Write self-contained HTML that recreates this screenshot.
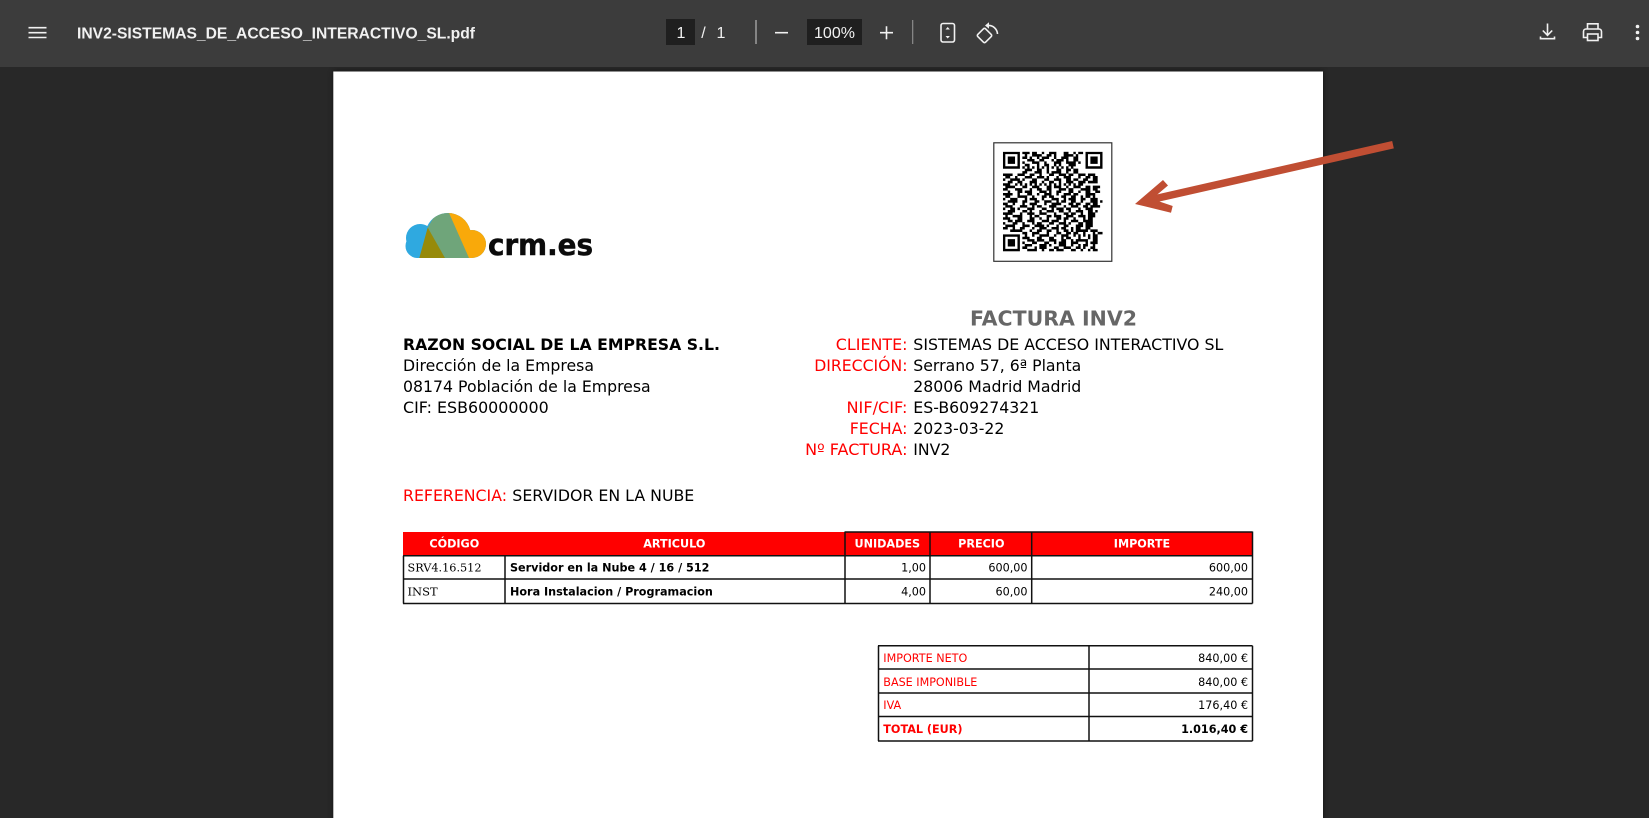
<!DOCTYPE html>
<html lang="es">
<head>
<meta charset="utf-8">
<title>INV2-SISTEMAS_DE_ACCESO_INTERACTIVO_SL.pdf</title>
<style>
html,body{margin:0;padding:0;width:1649px;height:818px;overflow:hidden;background:#282828}
svg{display:block;position:absolute;left:0;top:0}
.d{font-family:"DejaVu Sans","Liberation Sans",sans-serif}
.m{font-size:15.8px;fill:#000}
.e{text-anchor:end}
.c{text-anchor:middle}
.t{font-size:11.2px;fill:#000}
.m.r,.t.r{fill:#f00}
.b{font-weight:700}
.h{font-size:11.2px;font-weight:700;fill:#fff;text-anchor:middle}
.ui{font-family:"Liberation Sans",sans-serif;fill:#f1f1f1;font-size:16px}
</style>
</head>
<body>
<svg width="1649" height="818" viewBox="0 0 1649 818" xmlns="http://www.w3.org/2000/svg">
<defs>
<filter id="s" x="-5%" y="-5%" width="110%" height="110%"><feGaussianBlur stdDeviation="3"/></filter>
<clipPath id="cl">
<circle cx="420" cy="238" r="14"/>
<circle cx="417.500" cy="246" r="12"/>
<circle cx="448" cy="236" r="23"/>
<circle cx="472" cy="244" r="14"/>
<rect x="417" y="236" width="55" height="22"/>
</clipPath>
<clipPath id="qc"><rect x="0" y="0" width="41" height="41"/></clipPath>
</defs>

<rect width="1649" height="818" fill="#282828"/>
<rect x="333.300" y="71.500" width="989.700" height="760" fill="#000" opacity=".55" filter="url(#s)"/>
<rect x="333.300" y="71.500" width="989.700" height="750" fill="#fff"/>

<!-- toolbar -->
<rect width="1649" height="67" fill="#3c3c3c"/>
<path d="M28.500 27.700h18M28.500 32.700h18M28.500 37.500h18" stroke="#f1f1f1" stroke-width="1.600" fill="none"/>
<text class="ui" x="77" y="38.500" font-weight="700" textLength="398" lengthAdjust="spacingAndGlyphs">INV2-SISTEMAS_DE_ACCESO_INTERACTIVO_SL.pdf</text>

<rect x="666" y="19" width="29" height="26" fill="#1f1f1f"/>
<text class="ui c" x="681" y="38">1</text>
<text class="ui c" x="703.500" y="38">/</text>
<text class="ui c" x="721" y="38">1</text>
<rect x="755" y="20" width="2" height="24" fill="#858585"/>
<path d="M775 32.700h13" stroke="#f1f1f1" stroke-width="1.600"/>
<rect x="807" y="19" width="55" height="26" fill="#1f1f1f"/>
<text class="ui c" x="834.500" y="38">100%</text>
<path d="M880 32.700h13M886.500 26.200v13" stroke="#f1f1f1" stroke-width="1.600"/>
<rect x="912" y="20" width="1.300" height="24" fill="#858585"/>
<rect x="941" y="23.500" width="13.500" height="18.500" rx="2" fill="none" stroke="#f1f1f1" stroke-width="1.600"/>
<path d="M945.500 29.500l2.200-2.500 2.200 2.500zM945.500 36l2.200 2.500 2.200-2.500z" fill="#f1f1f1"/>
<g fill="none" stroke="#f1f1f1" stroke-width="1.600">
<rect x="-5.500" y="-5.500" width="11" height="11" rx="1.500" transform="translate(984.500 35.500) rotate(45)"/>
<path d="M988 25.500a9 9 0 0 1 9.500 8.500"/>
</g>
<path d="M989 22.300v6.400l-4-3.200z" fill="#f1f1f1"/>
<g fill="none" stroke="#f1f1f1" stroke-width="1.600">
<path d="M1547.500 23.500v11.500M1542.800 30.500l4.700 4.800 4.700-4.800M1540.500 36.500v2.200h14v-2.200"/>
<path d="M1587.500 29v-5.200h10.500v5.200M1587.500 37.500h-4v-6a2.500 2.500 0 0 1 2.500-2.500h13a2.500 2.500 0 0 1 2.500 2.500v6h-4"/>
<rect x="1587.500" y="34" width="10.500" height="6.500"/>
</g>
<circle cx="1637.500" cy="26.500" r="1.800" fill="#f1f1f1"/>
<circle cx="1637.500" cy="32.500" r="1.800" fill="#f1f1f1"/>
<circle cx="1637.500" cy="38.500" r="1.800" fill="#f1f1f1"/>

<!-- logo -->
<g clip-path="url(#cl)">
<rect x="400" y="205" width="90" height="55" fill="#2fa9e0"/>
<path d="M444 205h46v55h-26z" fill="#f9a90a"/>
<path d="M427.500 228L441 205h4.500l23.500 53h-24z" fill="#6fa57a"/>
<path d="M427.700 227.500L445 258h-25.700z" fill="#978a0a"/>
</g>
<rect x="400" y="258" width="90" height="4" fill="#fff"/>
<text class="d b" x="488" y="255" font-size="29" fill="#0b0b0b" stroke="#0b0b0b" stroke-width=".5" textLength="105" lengthAdjust="spacingAndGlyphs">crm.es</text>

<!-- QR -->
<rect x="993.800" y="142.800" width="118" height="118.500" fill="#fff" stroke="#333" stroke-width="1.200"/>
<g transform="translate(1002.900 151.700) scale(2.430)">
<g clip-path="url(#qc)">
<path fill-rule="evenodd" d="M0 0h7v7h-7zM1 1v5h5v-5zM34 0h7v7h-7zM35 1v5h5v-5zM0 34h7v7h-7zM1 35v5h5v-5z"/>
<path d="M2 2h3v3h-3zM36 2h3v3h-3zM2 36h3v3h-3z"/>
<path fill="none" stroke="#000" stroke-width="1.040" d="
M8 .5h3m1 0h2m2 0h1m2 0h3m3 0h2m2 0h1m1 0h2
M9 1.500h1m2 0h4m2 0h2m1 0h1m3 0h4m1 0h1
M8 2.500h2m1 0h1m2 0h1m1 0h3m2 0h1m2 0h3m2 0h2
M10 3.500h3m2 0h2m3 0h1m1 0h3m1 0h1m2 0h2
M8 4.500h1m3 0h3m2 0h1m3 0h3m2 0h4m1 0h1
M9 5.500h2m3 0h1m2 0h2m2 0h1m1 0h1m3 0h3
M8 6.500h1m1 0h1m1 0h1m1 0h1m1 0h1m1 0h1m1 0h1m1 0h1m1 0h1m1 0h1m1 0h1
M9 7.500h3m2 0h2m2 0h1m3 0h2m2 0h2m1 0h2
M8 8.500h2m3 0h3m2 0h1m1 0h4m2 0h1m2 0h2
M0 9.500h4m2 0h3m2 0h2m2 0h1m3 0h2m2 0h3m1 0h2m2 0h3m1 0h3
M1 10.500h2m2 0h1m3 0h3m2 0h3m1 0h1m3 0h1m2 0h3m3 0h1m2 0h2m1 0h2
M0 11.500h1m2 0h4m1 0h1m3 0h2m3 0h2m2 0h3m2 0h2m1 0h2m2 0h2m2 0h2
M2 12.500h2m2 0h2m3 0h3m2 0h1m2 0h2m2 0h1m2 0h3m2 0h3m1 0h4
M0 13.500h3m2 0h1m1 0h1m1 0h1m1 0h1m1 0h1m1 0h1m1 0h1m1 0h1m1 0h1m1 0h1m1 0h1m1 0h1m1 0h1m1 0h2
M1 14.500h4m3 0h2m2 0h3m3 0h2m1 0h3m2 0h1m2 0h3m2 0h2m1 0h3
M0 15.500h2m3 0h3m3 0h1m2 0h2m2 0h2m3 0h3m1 0h2m3 0h4m1 0h2
M2 16.500h1m3 0h2m1 0h3m3 0h3m1 0h1m2 0h2m3 0h2m2 0h1m2 0h2m2 0h2
M0 17.500h4m2 0h1m3 0h2m2 0h1m2 0h3m2 0h1m2 0h3m1 0h2m3 0h4
M1 18.500h2m3 0h4m2 0h1m3 0h2m1 0h2m3 0h2m2 0h2m2 0h1m1 0h2m1 0h1
M0 19.500h1m2 0h3m3 0h1m1 0h3m2 0h1m3 0h3m2 0h1m1 0h3m2 0h2m2 0h3
M2 20.500h4m2 0h2m3 0h2m2 0h3m2 0h1m1 0h2m2 0h2m2 0h1m3 0h3m1 0h1
M0 21.500h2m2 0h1m3 0h1m2 0h3m3 0h1m2 0h4m3 0h2m1 0h2m2 0h2m1 0h2
M1 22.500h3m3 0h3m2 0h1m1 0h2m3 0h3m3 0h1m2 0h3m2 0h2m1 0h4
M0 23.500h1m2 0h2m1 0h1m3 0h3m3 0h2m2 0h1m1 0h3m1 0h2m3 0h1m2 0h3
M2 24.500h3m3 0h2m1 0h1m3 0h1m2 0h3m2 0h2m2 0h1m2 0h3m2 0h2m1 0h1
M0 25.500h4m3 0h1m2 0h3m2 0h3m3 0h1m3 0h2m1 0h2m2 0h1m2 0h3
M1 26.500h1m2 0h4m3 0h1m1 0h2m3 0h2m1 0h3m2 0h3m2 0h3m1 0h3
M0 27.500h3m3 0h2m3 0h2m2 0h1m2 0h1m3 0h2m1 0h2m2 0h1m3 0h1m1 0h2
M2 28.500h2m1 0h3m2 0h3m3 0h3m1 0h3m2 0h1m2 0h3m2 0h4
M0 29.500h1m3 0h2m2 0h1m3 0h1m1 0h2m3 0h2m2 0h3m1 0h1m3 0h2m1 0h3
M1 30.500h4m3 0h3m2 0h4m1 0h1m3 0h1m2 0h2m3 0h3m1 0h3
M0 31.500h2m2 0h1m2 0h2m3 0h1m2 0h3m2 0h3m1 0h2m2 0h1m1 0h2m2 0h2
M3 32.500h5m3 0h1m2 0h2m2 0h2m2 0h1m2 0h2m1 0h1m1 0h5m1 0h3
M8 33.500h2m2 0h3m3 0h1m3 0h2m2 0h2m1 0h2m2 0h1m3 0h1m1 0h3
M9 34.500h1m2 0h1m2 0h4m2 0h1m2 0h3m2 0h1m1 0h1m1 0h1m1 0h1m1 0h2
M8 35.500h3m3 0h2m3 0h2m3 0h1m1 0h2m3 0h1m3 0h1m1 0h2
M10 36.500h3m1 0h3m2 0h3m2 0h2m2 0h1m1 0h5m2 0h2
M8 37.500h1m3 0h2m3 0h2m2 0h1m1 0h3m2 0h3m3 0h1m1 0h3
M9 38.500h3m3 0h3m1 0h1m3 0h3m2 0h1m2 0h1m1 0h2m2 0h1
M8 39.500h2m3 0h1m1 0h3m3 0h2m2 0h3m2 0h2m1 0h1m2 0h2
M10 40.500h4m2 0h1m2 0h2m1 0h3m3 0h2m2 0h1m2 0h1m1 0h2"/>
</g>
</g>

<!-- heading + address -->
<text class="d b" x="970" y="325.500" font-size="20.800" fill="#666" textLength="167" lengthAdjust="spacingAndGlyphs">FACTURA INV2</text>
<g class="d">
<text class="m b" x="403" y="350" textLength="317" lengthAdjust="spacingAndGlyphs">RAZON SOCIAL DE LA EMPRESA S.L.</text>
<text class="m" x="403" y="371" textLength="191" lengthAdjust="spacingAndGlyphs">Dirección de la Empresa</text>
<text class="m" x="403" y="392" textLength="247.700" lengthAdjust="spacingAndGlyphs">08174 Población de la Empresa</text>
<text class="m" x="403" y="413" textLength="145.700" lengthAdjust="spacingAndGlyphs">CIF: ESB60000000</text>

<text class="m r" x="835.800" y="350" textLength="71.700" lengthAdjust="spacingAndGlyphs">CLIENTE:</text>
<text class="m r" x="814.200" y="371" textLength="93.300" lengthAdjust="spacingAndGlyphs">DIRECCIÓN:</text>
<text class="m r" x="846.500" y="413" textLength="61" lengthAdjust="spacingAndGlyphs">NIF/CIF:</text>
<text class="m r" x="849.700" y="434" textLength="57.800" lengthAdjust="spacingAndGlyphs">FECHA:</text>
<text class="m r" x="805.200" y="455" textLength="102.300" lengthAdjust="spacingAndGlyphs">Nº FACTURA:</text>
<text class="m" x="913.300" y="350" textLength="310" lengthAdjust="spacingAndGlyphs">SISTEMAS DE ACCESO INTERACTIVO SL</text>
<text class="m" x="913.300" y="371" textLength="168" lengthAdjust="spacingAndGlyphs">Serrano 57, 6ª Planta</text>
<text class="m" x="913.300" y="392" textLength="168" lengthAdjust="spacingAndGlyphs">28006 Madrid Madrid</text>
<text class="m" x="913.300" y="413" textLength="126" lengthAdjust="spacingAndGlyphs">ES-B609274321</text>
<text class="m" x="913.300" y="434" textLength="91" lengthAdjust="spacingAndGlyphs">2023-03-22</text>
<text class="m" x="913.300" y="455" textLength="37" lengthAdjust="spacingAndGlyphs">INV2</text>

<text class="m r" x="403" y="501" textLength="104" lengthAdjust="spacingAndGlyphs">REFERENCIA:</text>
<text class="m" x="512.300" y="501" textLength="182" lengthAdjust="spacingAndGlyphs">SERVIDOR EN LA NUBE</text>
</g>

<!-- items table -->
<rect x="403" y="532" width="849.500" height="23.700" fill="#f00"/>
<path fill="none" stroke="#111" stroke-width="1.500" d="M845 532h407.500M403 555.700h849.500M403 579h849.500M403 603.500h849.500M403.500 555.700V603.500M505 555.700V603.500M845 531.500V603.500M930 531.500V603.500M1031.700 531.500V603.500M1252.500 531.500V603.500"/>
<g class="d">
<text class="h" x="454.300" y="547.500">CÓDIGO</text>
<text class="h" x="674.300" y="547.500">ARTICULO</text>
<text class="h" x="887.300" y="547.500">UNIDADES</text>
<text class="h" x="981.300" y="547.500">PRECIO</text>
<text class="h" x="1142" y="547.500">IMPORTE</text>

<text x="407.500" y="571.500" font-family="'DejaVu Serif','Liberation Serif',serif" font-size="11.500" textLength="74" lengthAdjust="spacingAndGlyphs">SRV4.16.512</text>
<text class="t b" x="510" y="571.500">Servidor en la Nube 4 / 16 / 512</text>
<text class="t e" x="926" y="571.500">1,00</text>
<text class="t e" x="1027.500" y="571.500">600,00</text>
<text class="t e" x="1248" y="571.500">600,00</text>

<text x="407.500" y="595.500" font-family="'DejaVu Serif','Liberation Serif',serif" font-size="11.500">INST</text>
<text class="t b" x="510" y="595.500">Hora Instalacion / Programacion</text>
<text class="t e" x="926" y="595.500">4,00</text>
<text class="t e" x="1027.500" y="595.500">60,00</text>
<text class="t e" x="1248" y="595.500">240,00</text>
</g>

<!-- totals table -->
<path fill="none" stroke="#111" stroke-width="1.500" d="M878 645.700h374.500M878 669h374.500M878 693h374.500M878 716.500h374.500M878 741h374.500M878.500 645.700V741M1089 645.700V741M1252.500 645.700V741"/>
<g class="d">
<text class="t r" x="883.300" y="662" textLength="84" lengthAdjust="spacingAndGlyphs">IMPORTE NETO</text>
<text class="t e" x="1248" y="662">840,00 €</text>
<text class="t r" x="883.300" y="686" textLength="94" lengthAdjust="spacingAndGlyphs">BASE IMPONIBLE</text>
<text class="t e" x="1248" y="686">840,00 €</text>
<text class="t r" x="883.300" y="709">IVA</text>
<text class="t e" x="1248" y="709">176,40 €</text>
<text class="t r b" x="883.300" y="733">TOTAL (EUR)</text>
<text class="t b e" x="1248" y="733">1.016,40 €</text>
</g>

<!-- arrow -->
<path d="M1393 144.700L1145 201" stroke="#c04e33" stroke-width="7.500" fill="none"/>
<path d="M1135 204L1163 180L1168 185.500L1152 199L1172.700 206L1171 212.700z" fill="#c04e33"/>
</svg>
</body>
</html>
